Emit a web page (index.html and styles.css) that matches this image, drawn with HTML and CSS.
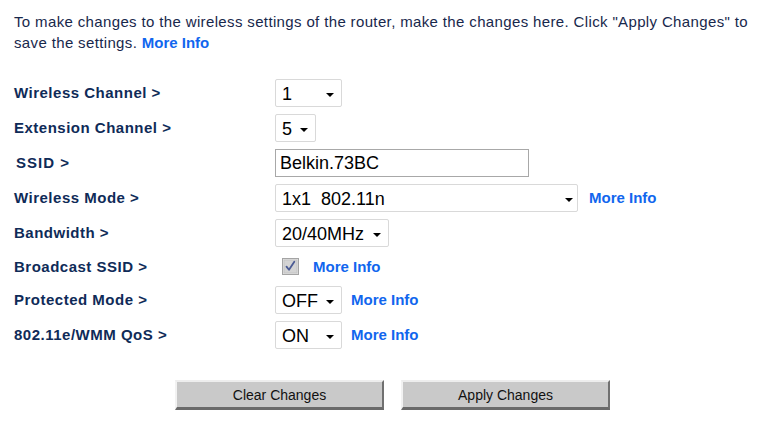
FILE: index.html
```html
<!DOCTYPE html>
<html>
<head>
<meta charset="utf-8">
<link rel="stylesheet" href="styles.css">
</head>
<body>
<div class="page">
  <p class="intro">To make changes to the wireless settings of the router, make the changes here. Click "Apply Changes" to save the settings. <a class="more" href="#">More Info</a></p>

  <div class="form">
    <div class="row">
      <div class="label">Wireless Channel &gt;</div>
      <div class="ctrl">
        <span class="sel w-ch"><select><option>1</option></select><span class="arrow"></span></span>
      </div>
    </div>
    <div class="row">
      <div class="label">Extension Channel &gt;</div>
      <div class="ctrl">
        <span class="sel w-ext"><select><option>5</option></select><span class="arrow"></span></span>
      </div>
    </div>
    <div class="row">
      <div class="label label-ssid">SSID &gt;</div>
      <div class="ctrl">
        <input class="text" type="text" value="Belkin.73BC">
      </div>
    </div>
    <div class="row">
      <div class="label">Wireless Mode &gt;</div>
      <div class="ctrl">
        <span class="sel w-mode"><select><option>1x1&nbsp; 802.11n</option></select><span class="arrow arrow-tight"></span></span>
        <a class="more more-gap-wide" href="#">More Info</a>
      </div>
    </div>
    <div class="row">
      <div class="label">Bandwidth &gt;</div>
      <div class="ctrl">
        <span class="sel w-bw"><select><option>20/40MHz</option></select><span class="arrow"></span></span>
      </div>
    </div>
    <div class="row row-check">
      <div class="label">Broadcast SSID &gt;</div>
      <div class="ctrl">
        <span class="check">
          <svg width="17" height="17" viewBox="0 0 17 17">
            <rect x="0.5" y="0.5" width="16" height="16" fill="#e6e6e6" stroke="#a4a4a4"/>
            <rect x="2" y="2" width="13" height="13" fill="#d4d4d4" stroke="#c4c4c4" stroke-width="1"/>
            <path d="M4.5 8.6 L7 11.8 L12.3 3.8" fill="none" stroke="#4b5b94" stroke-width="1.8" stroke-linejoin="round" stroke-linecap="round"/>
          </svg>
        </span>
        <a class="more more-gap-check" href="#">More Info</a>
      </div>
    </div>
    <div class="row">
      <div class="label">Protected Mode &gt;</div>
      <div class="ctrl">
        <span class="sel w-ch"><select><option>OFF</option></select><span class="arrow"></span></span>
        <a class="more more-gap" href="#">More Info</a>
      </div>
    </div>
    <div class="row">
      <div class="label">802.11e/WMM QoS &gt;</div>
      <div class="ctrl">
        <span class="sel w-ch"><select><option>ON</option></select><span class="arrow"></span></span>
        <a class="more more-gap" href="#">More Info</a>
      </div>
    </div>
  </div>

  <div class="buttons">
    <button class="btn" type="button">Clear Changes</button>
    <button class="btn" type="button">Apply Changes</button>
  </div>
</div>
</body>
</html>
```

FILE: styles.css
```css
html, body {
  margin: 0;
  padding: 0;
  background: #ffffff;
}

body {
  font-family: "Liberation Sans", Arial, sans-serif;
}

.page {
  padding: 11px 0 0 14px;
  width: 742px;
}

.intro {
  margin: 0;
  font-size: 15px;
  line-height: 21px;
  color: #18284c;
  letter-spacing: 0.36px;
}

.more {
  color: #1166ee;
  font-weight: bold;
  font-size: 15px;
  text-decoration: none;
  letter-spacing: 0;
}

.form {
  margin-top: 22px;
  display: flex;
  flex-direction: column;
}

.row {
  display: grid;
  grid-template-columns: 261px 1fr;
  align-items: center;
  height: 35px;
}

.row-check {
  height: 32px;
}

.label {
  font-weight: bold;
  font-size: 15px;
  color: #0f2b58;
  letter-spacing: 0.5px;
}

.label-ssid {
  padding-left: 2px;
  letter-spacing: 1px;
}

.ctrl {
  display: flex;
  align-items: center;
}

.sel {
  position: relative;
  display: inline-block;
  height: 28px;
}

.sel select {
  -webkit-appearance: none;
  appearance: none;
  box-sizing: border-box;
  width: 100%;
  height: 28px;
  margin: 0;
  padding: 3px 0 0 6px;
  border: 1px solid #d9d9d9;
  border-radius: 2px;
  background: #ffffff;
  font-family: "Liberation Sans", Arial, sans-serif;
  font-size: 18px;
  color: #000000;
  outline: none;
}

.arrow {
  position: absolute;
  right: 8px;
  top: 14px;
  width: 0;
  height: 0;
  border-left: 4.5px solid transparent;
  border-right: 4.5px solid transparent;
  border-top: 4.5px solid #000000;
  pointer-events: none;
}

.arrow-tight {
  right: 5px;
}

.w-ch { width: 67px; }
.w-ext { width: 41px; }
.w-mode { width: 303px; }
.w-bw { width: 114px; }

.text {
  box-sizing: border-box;
  width: 254px;
  height: 28px;
  margin: 0;
  padding: 2px 0 0 4px;
  border: 1px solid #a8a8a8;
  background: #ffffff;
  font-family: "Liberation Sans", Arial, sans-serif;
  font-size: 18px;
  color: #000000;
  outline: none;
}

.more-gap { margin-left: 9px; }
.more-gap-wide { margin-left: 11px; }
.more-gap-check { margin-left: 14px; }

.check {
  display: inline-flex;
  margin-left: 7px;
  margin-top: 1px;
}

.buttons {
  display: flex;
  gap: 17px;
  margin-top: 28px;
  padding-left: 161px;
}

.btn {
  box-sizing: border-box;
  width: 209px;
  height: 30px;
  margin: 0;
  padding: 0;
  background: #c9c9c9;
  border-style: solid;
  border-width: 2px 2px 3px 2px;
  border-color: #ededed #707070 #6a6a6a #f2f2f2;
  font-family: "Liberation Sans", Arial, sans-serif;
  font-size: 14px;
  color: #111111;
}
```
